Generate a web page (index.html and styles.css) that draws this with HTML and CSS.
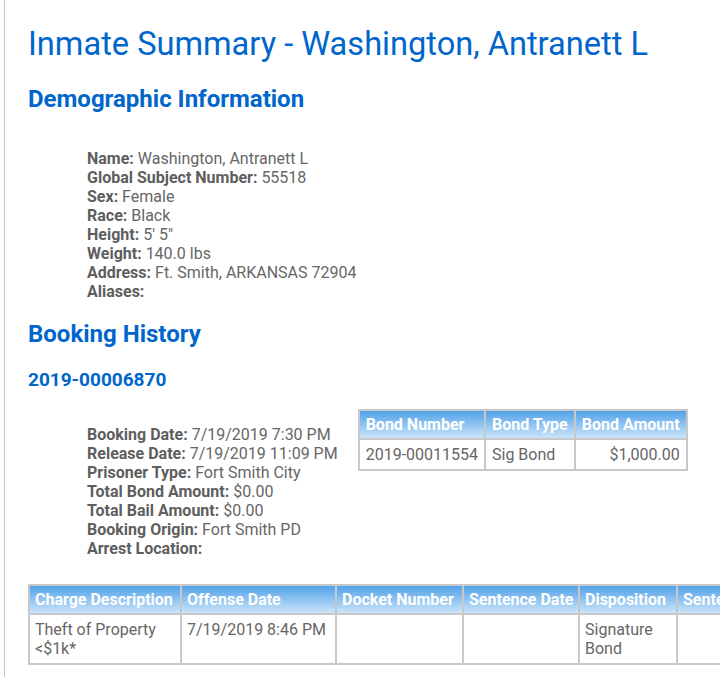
FILE: index.html
```html
<!DOCTYPE html>
<html lang="en">

<head>
    <meta charset="UTF-8">
    <meta name="viewport" content="width=device-width, initial-scale=1.0">
    <title>Inmate Summary</title>
    <link rel="stylesheet" href="styles.css">
</head>

<body>
    <div class="page">
        <h1>Inmate Summary - Washington, Antranett L</h1>

        <h2>Demographic Information</h2>
        <div class="info demo">
            <div><b>Name:</b> Washington, Antranett L</div>
            <div><b>Global Subject Number:</b> 55518</div>
            <div><b>Sex:</b> Female</div>
            <div><b>Race:</b> Black</div>
            <div><b>Height:</b> 5' 5"</div>
            <div><b>Weight:</b> 140.0 lbs</div>
            <div><b>Address:</b> Ft. Smith, ARKANSAS 72904</div>
            <div><b>Aliases:</b> </div>
        </div>

        <h2>Booking History</h2>
        <h3>2019-00006870</h3>

        <div class="booking">
            <div class="info booking-info">
                <div><b>Booking Date:</b> 7/19/2019 7:30 PM</div>
                <div><b>Release Date:</b> 7/19/2019 11:09 PM</div>
                <div><b>Prisoner Type:</b> Fort Smith City</div>
                <div><b>Total Bond Amount:</b> $0.00</div>
                <div><b>Total Bail Amount:</b> $0.00</div>
                <div><b>Booking Origin:</b> Fort Smith PD</div>
                <div><b>Arrest Location:</b> </div>
            </div>

            <table class="grid bonds">
                <tr>
                    <th>Bond Number</th>
                    <th>Bond Type</th>
                    <th>Bond Amount</th>
                </tr>
                <tr>
                    <td>2019-00011554</td>
                    <td>Sig Bond</td>
                    <td class="num">$1,000.00</td>
                </tr>
            </table>
        </div>

        <table class="grid charges">
            <colgroup>
                <col class="c-desc">
                <col class="c-date">
                <col class="c-docket">
                <col class="c-sent">
                <col class="c-disp">
                <col class="c-len">
            </colgroup>
            <tr>
                <th>Charge Description</th>
                <th>Offense Date</th>
                <th>Docket Number</th>
                <th>Sentence Date</th>
                <th>Disposition</th>
                <th>Sentence Length</th>
            </tr>
            <tr>
                <td>Theft of Property &lt;$1k*</td>
                <td>7/19/2019 8:46 PM</td>
                <td></td>
                <td></td>
                <td>Signature Bond</td>
                <td></td>
            </tr>
        </table>
    </div>
</body>

</html>
```

FILE: styles.css
```css
body {
    font-family: Roboto, "Liberation Sans", sans-serif;
    margin: 0 0 0 4px;
    background: #fff;
    color: #666;
    overflow: hidden;
}

.page {
    border-left: 1px solid #c4c4c4;
    padding: 25px 0 20px 23px;
    min-height: 660px;
}

h1 {
    font-size: 32.6px;
    font-weight: 400;
    color: #0066cc;
    margin: 0 0 22px 0;
}

h2 {
    font-size: 24px;
    font-weight: 700;
    color: #0066cc;
    margin: 0;
}

h3 {
    font-size: 19px;
    font-weight: 700;
    color: #0066cc;
    margin: 20px 0 0 0;
}

.info {
    font-size: 16px;
    line-height: 19px;
    padding-left: 59px;
}

.info b {
    color: #5e5e5e;
}

.demo {
    margin: 36px 0 19px 0;
}

.booking {
    display: flex;
    align-items: flex-start;
    gap: 20px;
    margin-top: 18px;
}

.booking-info {
    margin-top: 16px;
}

.grid {
    border-collapse: separate;
    border-spacing: 0;
    border: 1px solid #c8c8c8;
    font-size: 16px;
}

.grid th,
.grid td {
    border: 1px solid #c8c8c8;
    text-align: left;
    vertical-align: top;
}

.grid th {
    color: #fff;
    font-weight: 700;
    white-space: nowrap;
    overflow: hidden;
    background: linear-gradient(#52a2e8, #cbe4fa);
    padding: 4px 5px;
}

.grid td {
    color: #666;
    line-height: 19px;
    padding: 5px 5px;
}

.bonds th,
.bonds td {
    padding-left: 6px;
    padding-right: 6px;
}

.grid td.num {
    text-align: right;
}

.charges {
    margin-top: 26px;
    table-layout: fixed;
    width: 819px;
}

.c-desc {
    width: 152px;
}

.c-date {
    width: 155px;
}

.c-docket {
    width: 127px;
}

.c-sent {
    width: 116px;
}

.c-disp {
    width: 98px;
}

.c-len {
    width: 170px;
}
```
